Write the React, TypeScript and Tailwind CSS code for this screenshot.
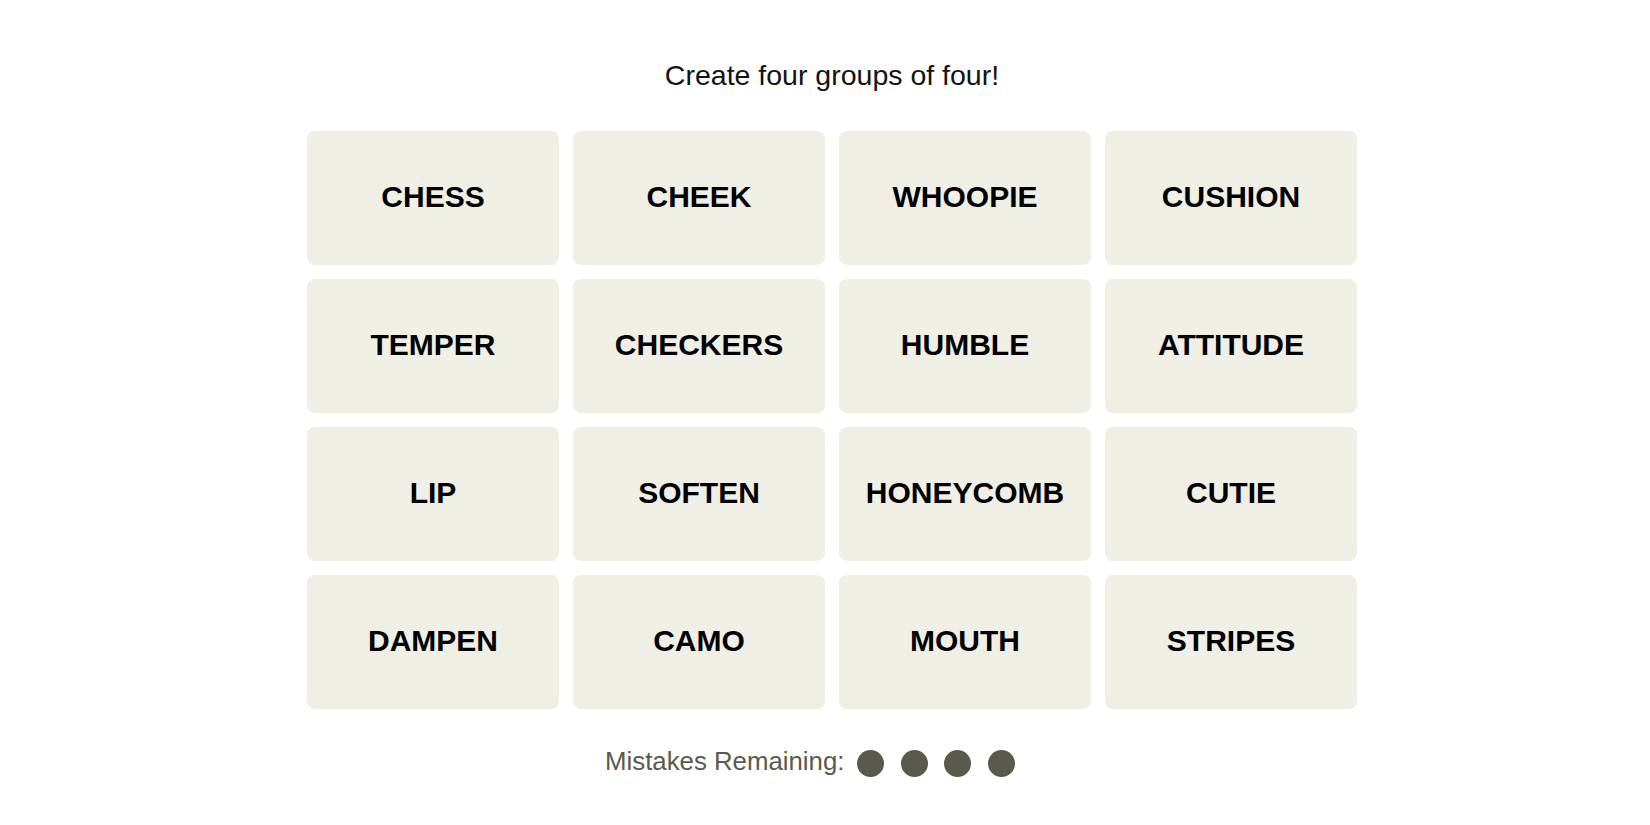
const words = [
  'CHESS', 'CHEEK', 'WHOOPIE', 'CUSHION',
  'TEMPER', 'CHECKERS', 'HUMBLE', 'ATTITUDE',
  'LIP', 'SOFTEN', 'HONEYCOMB', 'CUTIE',
  'DAMPEN', 'CAMO', 'MOUTH', 'STRIPES',
]

export default function App() {
  return (
    <div className="min-h-screen bg-white flex justify-center pl-[14px] pt-[57px]" style={{ fontFamily: '"Liberation Sans", Arial, sans-serif' }}>
      <div className="w-[1050px] flex flex-col items-center">
        <h1 className="h-[36px] leading-[36px] text-[28.5px] font-normal text-[#121212]">
          Create four groups of four!
        </h1>

        <div className="mt-[38px] grid grid-cols-4 gap-[14px] w-full">
          {words.map(w => (
            <button
              key={w}
              className="h-[134px] rounded-[8px] bg-[#efefe6] flex items-center justify-center pb-[4px] text-[30px] font-bold text-black uppercase"
            >
              {w}
            </button>
          ))}
        </div>

        <div className="mt-[33px] h-[40px] flex items-center pr-[44px]">
          <span className="text-[25.8px] text-[#5a594e] leading-none">Mistakes Remaining:</span>
          <div className="flex items-center gap-[16.5px] ml-[13px] pt-[2px]">
            {[0, 1, 2, 3].map(i => (
              <span key={i} className="block w-[27px] h-[27px] rounded-full bg-[#5a594e]" />
            ))}
          </div>
        </div>
      </div>
    </div>
  )
}
